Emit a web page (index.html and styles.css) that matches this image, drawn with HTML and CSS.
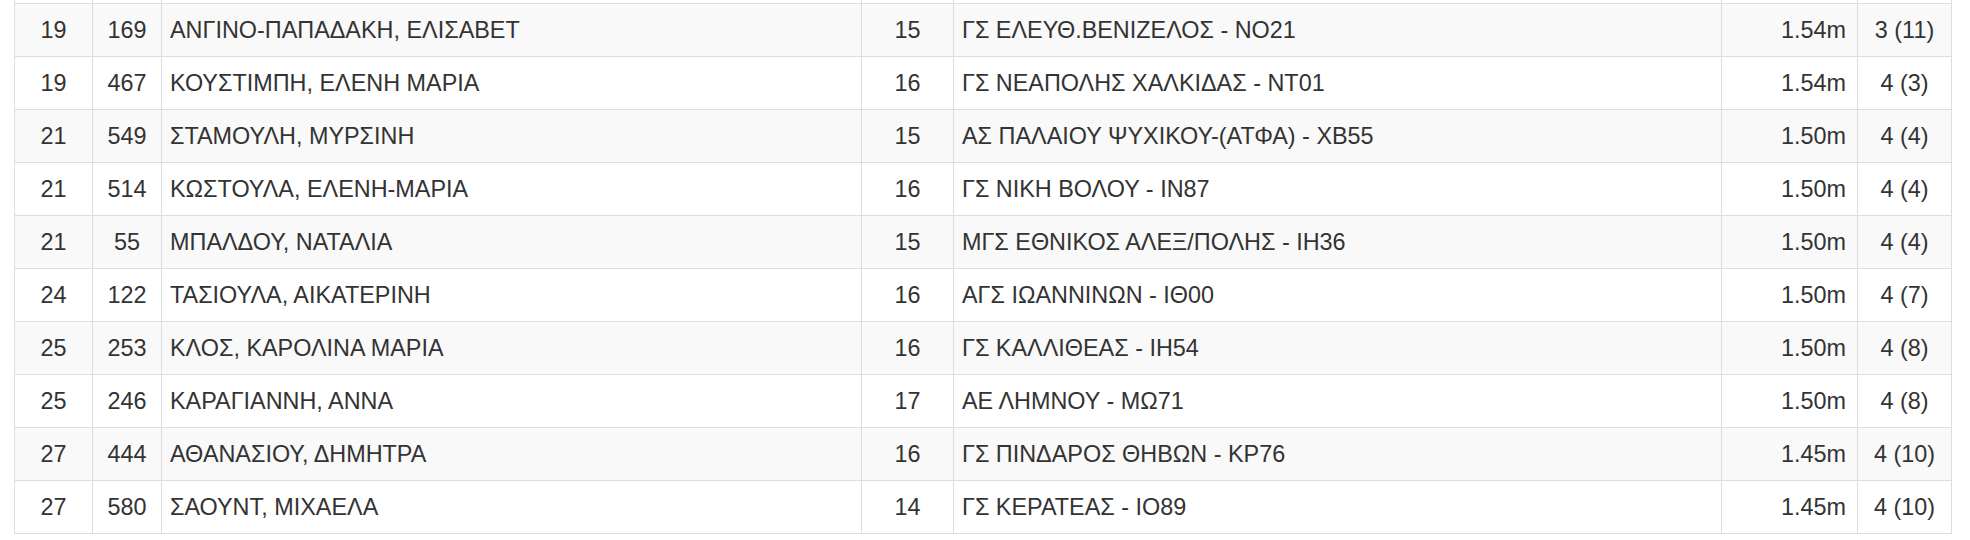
FILE: index.html
```html
<!DOCTYPE html>
<html lang="el">
<head>
<meta charset="utf-8">
<title>Αποτελέσματα</title>
<link rel="stylesheet" href="styles.css">
</head>
<body>
<div class="page">
<table class="results">
<colgroup>
<col class="c-rank"><col class="c-bib"><col class="c-name"><col class="c-age"><col class="c-club"><col class="c-mark"><col class="c-att">
</colgroup>
<tbody>
<tr class="cut"><td></td><td></td><td></td><td></td><td></td><td></td><td></td></tr>
<tr><td class="ctr">19</td><td class="ctr">169</td><td class="txt">ΑΝΓΙΝΟ-ΠΑΠΑΔΑΚΗ, ΕΛΙΣΑΒΕΤ</td><td class="ctr">15</td><td class="txt">ΓΣ ΕΛΕΥΘ.ΒΕΝΙΖΕΛΟΣ - ΝΟ21</td><td class="rgt">1.54m</td><td class="ctr">3 (11)</td></tr>
<tr><td class="ctr">19</td><td class="ctr">467</td><td class="txt">ΚΟΥΣΤΙΜΠΗ, ΕΛΕΝΗ ΜΑΡΙΑ</td><td class="ctr">16</td><td class="txt">ΓΣ ΝΕΑΠΟΛΗΣ ΧΑΛΚΙΔΑΣ - ΝΤ01</td><td class="rgt">1.54m</td><td class="ctr">4 (3)</td></tr>
<tr><td class="ctr">21</td><td class="ctr">549</td><td class="txt">ΣΤΑΜΟΥΛΗ, ΜΥΡΣΙΝΗ</td><td class="ctr">15</td><td class="txt">ΑΣ ΠΑΛΑΙΟΥ ΨΥΧΙΚΟΥ-(ΑΤΦΑ) - ΧΒ55</td><td class="rgt">1.50m</td><td class="ctr">4 (4)</td></tr>
<tr><td class="ctr">21</td><td class="ctr">514</td><td class="txt">ΚΩΣΤΟΥΛΑ, ΕΛΕΝΗ-ΜΑΡΙΑ</td><td class="ctr">16</td><td class="txt">ΓΣ ΝΙΚΗ ΒΟΛΟΥ - ΙΝ87</td><td class="rgt">1.50m</td><td class="ctr">4 (4)</td></tr>
<tr><td class="ctr">21</td><td class="ctr">55</td><td class="txt">ΜΠΑΛΔΟΥ, ΝΑΤΑΛΙΑ</td><td class="ctr">15</td><td class="txt">ΜΓΣ ΕΘΝΙΚΟΣ ΑΛΕΞ/ΠΟΛΗΣ - ΙΗ36</td><td class="rgt">1.50m</td><td class="ctr">4 (4)</td></tr>
<tr><td class="ctr">24</td><td class="ctr">122</td><td class="txt">ΤΑΣΙΟΥΛΑ, ΑΙΚΑΤΕΡΙΝΗ</td><td class="ctr">16</td><td class="txt">ΑΓΣ ΙΩΑΝΝΙΝΩΝ - ΙΘ00</td><td class="rgt">1.50m</td><td class="ctr">4 (7)</td></tr>
<tr><td class="ctr">25</td><td class="ctr">253</td><td class="txt">ΚΛΟΣ, ΚΑΡΟΛΙΝΑ ΜΑΡΙΑ</td><td class="ctr">16</td><td class="txt">ΓΣ ΚΑΛΛΙΘΕΑΣ - ΙΗ54</td><td class="rgt">1.50m</td><td class="ctr">4 (8)</td></tr>
<tr><td class="ctr">25</td><td class="ctr">246</td><td class="txt">ΚΑΡΑΓΙΑΝΝΗ, ΑΝΝΑ</td><td class="ctr">17</td><td class="txt">ΑΕ ΛΗΜΝΟΥ - ΜΩ71</td><td class="rgt">1.50m</td><td class="ctr">4 (8)</td></tr>
<tr><td class="ctr">27</td><td class="ctr">444</td><td class="txt">ΑΘΑΝΑΣΙΟΥ, ΔΗΜΗΤΡΑ</td><td class="ctr">16</td><td class="txt">ΓΣ ΠΙΝΔΑΡΟΣ ΘΗΒΩΝ - ΚΡ76</td><td class="rgt">1.45m</td><td class="ctr">4 (10)</td></tr>
<tr><td class="ctr">27</td><td class="ctr">580</td><td class="txt">ΣΑΟΥΝΤ, ΜΙΧΑΕΛΑ</td><td class="ctr">14</td><td class="txt">ΓΣ ΚΕΡΑΤΕΑΣ - ΙΟ89</td><td class="rgt">1.45m</td><td class="ctr">4 (10)</td></tr>
</tbody>
</table>
</div>
</body>
</html>
```

FILE: styles.css
```css
html, body {
  margin: 0;
  padding: 0;
  background: #fff;
}

.page {
  padding: 0 0 0 14px;
  font-family: "Liberation Sans", Arial, "Noto Sans", sans-serif;
  font-size: 23.4px;
  color: #333;
}

.results {
  border-collapse: collapse;
  table-layout: fixed;
  width: 1937px;
}

.c-rank { width: 78px; }
.c-bib { width: 69px; }
.c-name { width: 700px; }
.c-age { width: 92px; }
.c-club { width: 768px; }
.c-mark { width: 136px; }
.c-att { width: 94px; }

.results td {
  border: 1px solid #ddd;
  padding: 12px 10px;
  line-height: 28px;
  white-space: nowrap;
  vertical-align: middle;
}

.results td.txt {
  padding-left: 8px;
}

.results td.rgt {
  padding-right: 11px;
}

.results tr:nth-child(even) td {
  background: #f9f9f9;
}

.results tr.cut td {
  border-top: 0;
  padding: 0;
  height: 3px;
  line-height: 0;
  background: #fff;
}

.ctr { text-align: center; }
.rgt { text-align: right; }
```
